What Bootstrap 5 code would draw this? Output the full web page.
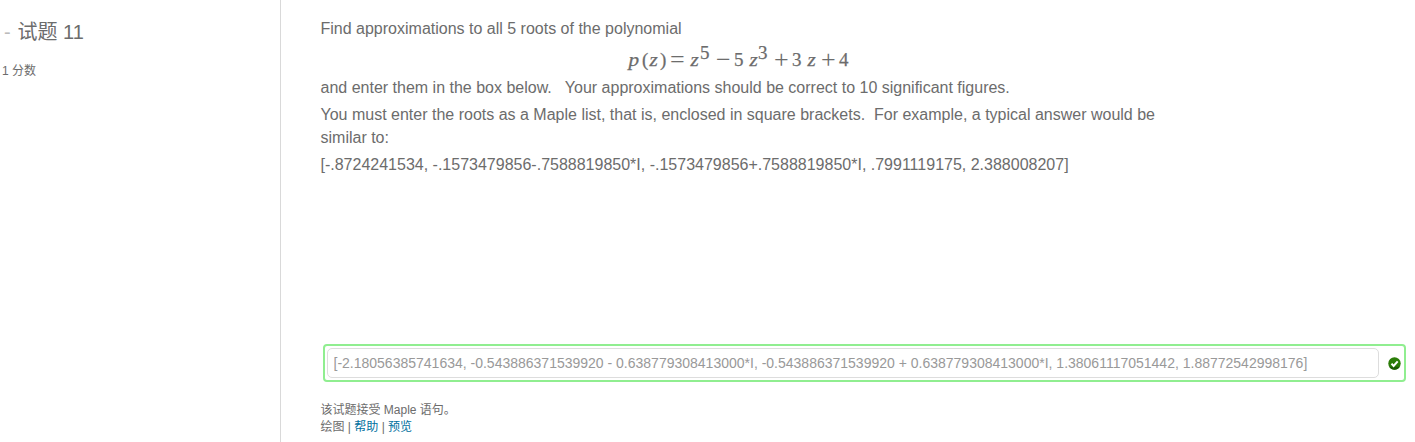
<!DOCTYPE html>
<html lang="zh-CN">
<head>
<meta charset="utf-8">
<meta name="viewport" content="width=device-width, initial-scale=1">
<title>试题 11</title>
<link href="https://cdn.jsdelivr.net/npm/bootstrap@5.3.0/dist/css/bootstrap.min.css" rel="stylesheet">
<style>
body{font-family:"Liberation Sans","Noto Sans CJK SC",sans-serif;color:#6c6c6c;background:#fff;height:442px;overflow:hidden}
.side{width:281px;border-right:1px solid #d9d9d9;padding:17px 0 0 2px}
.side h1{font-size:20px;line-height:30px;font-weight:400;margin:0 0 15px 2px;white-space:pre}
.side h1 span{color:#bbb;display:inline-block;width:13.5px}
.score{font-size:12px;line-height:18px}
.main{padding:17px 9px 0 39.5px}
.question{width:836px;font-size:16px;line-height:23px}
.question p{margin:0 0 4px;white-space:pre-wrap}
.formula{font-family:"Liberation Serif",serif;font-size:19px;line-height:32px;height:32px;-webkit-text-stroke:.25px}
.formula span{flex:none;white-space:nowrap}
.formula .up{transform:translateY(-7px)}
.formula .op{font-size:26px;line-height:20px;transform:translate(1px,2px);-webkit-text-stroke:0}
.formula i{display:inline-block;transform:translateX(.5px) scaleX(1.12);transform-origin:left}
.answer{margin:168px 0 0 2.5px;height:38px;border:2px solid #90ee90;border-radius:4px;padding:2px 3.5px 2px 2px}
.answer input{width:1052px;height:30px;border:1px solid #ddd;border-radius:5px;padding:0 5.5px;font-size:14px;color:#999;background:#fff}
.foot{font-size:12px;line-height:17px;margin-top:20px}
.foot a{color:#00709e;text-decoration:none}
</style>
</head>
<body class="d-flex">
<aside class="side flex-shrink-0">
  <h1><span>-</span>试题 11</h1>
  <div class="score">1 分数</div>
</aside>
<main class="main flex-grow-1">
  <div class="question">
    <p class="mb-0">Find approximations to all 5 roots of the polynomial</p>
    <div class="formula d-flex justify-content-center align-items-baseline mt-1">
      <span style="width:14px"><i>p</i></span><span style="width:7px">(</span><span style="width:11px"><i>z</i></span><span style="width:9px">)</span><span class="op" style="width:21px">=</span><span style="width:10px"><i>z</i></span><span class="up" style="width:15px">5</span><span class="op" style="width:19px">−</span><span style="width:15px">5</span><span style="width:9px"><i>z</i></span><span class="up" style="width:15px">3</span><span class="op" style="width:19px">+</span><span style="width:15px">3</span><span style="width:13px"><i>z</i></span><span class="op" style="width:19px">+</span><span style="width:10px">4</span>
    </div>
    <p>and enter them in the box below.&nbsp;&nbsp; Your approximations should be correct to 10 significant figures.</p>
    <p>You must enter the roots as a Maple list, that is, enclosed in square brackets.&nbsp; For example, a typical answer would be similar to:</p>
    <p>[-.8724241534, -.1573479856-.7588819850*I, -.1573479856+.7588819850*I, .7991119175, 2.388008207]</p>
  </div>
  <div class="answer d-flex align-items-center justify-content-between">
    <input type="text" readonly value="[-2.18056385741634, -0.543886371539920 - 0.638779308413000*I, -0.543886371539920 + 0.638779308413000*I, 1.38061117051442, 1.88772542998176]">
    <svg width="13" height="13" viewBox="0 0 13 13"><circle cx="6.5" cy="6.5" r="6.2" fill="#2b7d08"/><path d="M1.2 9.8A6.2 6.2 0 0 0 11.8 9.8" fill="#1c5c04"/><path d="M3.5 6.7l2.1 2.3 4.1-4.7" fill="none" stroke="#fff" stroke-width="2"/></svg>
  </div>
  <div class="foot">该试题接受 Maple 语句。<br>绘图 | <a href="#">帮助</a> | <a href="#">预览</a></div>
</main>
</body>
</html>
